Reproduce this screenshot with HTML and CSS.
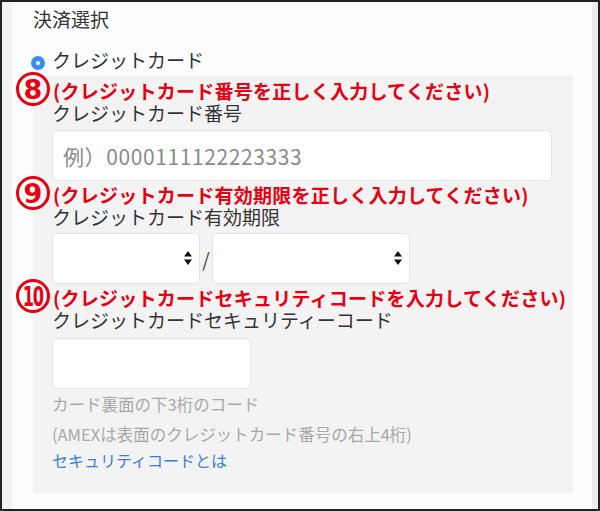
FILE: index.html
```html
<!DOCTYPE html>
<html lang="ja">
<head>
  <meta charset="UTF-8">
  <title>決済選択</title>
  <link rel="stylesheet" href="styles.css">
</head>
<body>
  <div class="frame">
    <div class="page">
      <div class="section-title">決済選択</div>

      <label class="radio-row">
        <span class="radio"></span>
        <span>クレジットカード</span>
      </label>

      <div class="card-panel">
        <div class="note">
          <span class="num">8</span>
          <span class="note-text">(クレジットカード番号を正しく入力してください)</span>
        </div>
        <div class="field-label">クレジットカード番号</div>
        <input class="text-input card-number" type="text" placeholder="例）0000111122223333">

        <div class="note">
          <span class="num">9</span>
          <span class="note-text">(クレジットカード有効期限を正しく入力してください)</span>
        </div>
        <div class="field-label">クレジットカード有効期限</div>
        <div class="expiry">
          <span class="select-wrap month">
            <select></select>
            <svg class="arrows" width="8" height="14" viewBox="0 0 8 14"><path d="M4 0 L8 5.5 L0 5.5 Z M4 14 L8 8.5 L0 8.5 Z" fill="#111"/></svg>
          </span>
          <span class="slash">/</span>
          <span class="select-wrap year">
            <select></select>
            <svg class="arrows" width="8" height="14" viewBox="0 0 8 14"><path d="M4 0 L8 5.5 L0 5.5 Z M4 14 L8 8.5 L0 8.5 Z" fill="#111"/></svg>
          </span>
        </div>

        <div class="note">
          <span class="num num-wide"><span>10</span></span>
          <span class="note-text">(クレジットカードセキュリティコードを入力してください)</span>
        </div>
        <div class="field-label">クレジットカードセキュリティーコード</div>
        <input class="text-input cvc" type="text">

        <div class="hint">カード裏面の下3桁のコード</div>
        <div class="hint">(AMEXは表面のクレジットカード番号の右上4桁)</div>
        <a class="help-link" href="#">セキュリティコードとは</a>
      </div>
    </div>
  </div>
</body>
</html>
```

FILE: styles.css
```css
body {
  margin: 0;
  font-family: "Noto Sans CJK JP", "Noto Sans", sans-serif;
  color: #333;
}
.frame {
  width: 600px;
  height: 511px;
  box-sizing: border-box;
  border: 2px solid #222;
  overflow: hidden;
  display: flex;
}
.page {
  flex: 1;
  min-width: 0;
  background: #fdfdfd;
  border-left: 10px solid #f2f2f2;
  border-right: 6px solid #ededed;
}
.section-title {
  font-size: 19px;
  line-height: 26px;
  padding: 4px 0 0 21px;
}
.radio-row {
  display: flex;
  align-items: center;
  gap: 7px;
  margin-top: 15px;
  padding-left: 19px;
  font-size: 19px;
  line-height: 26px;
}
.radio {
  width: 14px;
  height: 14px;
  border-radius: 50%;
  background: #3c8df2;
  display: flex;
  align-items: center;
  justify-content: center;
  margin-top: 6px;
}
.radio::after {
  content: "";
  width: 4px;
  height: 4px;
  border-radius: 50%;
  background: #fff;
}
.card-panel {
  margin: 3px 19px 0 21px;
  background: #f3f3f3;
  padding: 4px 19px 20px 19px;
}
.note {
  display: flex;
  align-items: center;
  gap: 3px;
  height: 22px;
  margin-left: -36px;
  margin-top: 3px;
  color: #e60012;
}
.note:first-child {
  margin-top: 0;
}
.num {
  flex: none;
  width: 34px;
  height: 34px;
  box-sizing: border-box;
  border: 3px solid #e60012;
  border-radius: 50%;
  display: flex;
  align-items: center;
  justify-content: center;
  font-family: "DejaVu Sans", sans-serif;
  font-weight: 700;
  font-size: 27px;
  line-height: 1;
  margin-top: -4px;
}
.num-wide span {
  display: inline-block;
  transform: scaleX(0.6);
  letter-spacing: -2px;
}
.note-text {
  font-size: 19px;
  font-weight: 700;
  line-height: 22px;
  letter-spacing: 0.25px;
  white-space: nowrap;
}
.field-label {
  font-size: 19px;
  line-height: 22px;
  color: #333;
}
.text-input {
  display: block;
  box-sizing: border-box;
  height: 51px;
  margin-top: 6px;
  border: 1px solid #e4e4e4;
  border-radius: 5px;
  background: #fff;
  padding: 0 10px;
  font-family: "Noto Sans CJK JP", sans-serif;
  font-size: 21px;
  letter-spacing: 0.6px;
  outline: none;
}
.text-input::placeholder {
  color: #8a8a8a;
}
.card-number {
  width: 500px;
}
.cvc {
  width: 199px;
  margin-top: 7px;
}
.expiry {
  display: flex;
  align-items: center;
  margin-top: 5px;
}
.select-wrap {
  position: relative;
  display: block;
  height: 51px;
}
.select-wrap select {
  appearance: none;
  -webkit-appearance: none;
  width: 100%;
  height: 51px;
  box-sizing: border-box;
  border: 1px solid #e4e4e4;
  border-radius: 5px;
  background: #fff;
  outline: none;
}
.month {
  width: 148px;
}
.year {
  width: 198px;
}
.arrows {
  position: absolute;
  right: 8px;
  top: 18px;
}
.slash {
  width: 12px;
  text-align: center;
  font-size: 19px;
  color: #444;
}
.hint {
  font-size: 16.5px;
  line-height: 26px;
  color: #a8a8a8;
}
.hint + .hint {
  margin-top: 4px;
}
.cvc + .hint {
  margin-top: 2px;
}
.help-link {
  display: block;
  font-size: 16px;
  line-height: 26px;
  color: #3680d4;
  text-decoration: none;
}
```
